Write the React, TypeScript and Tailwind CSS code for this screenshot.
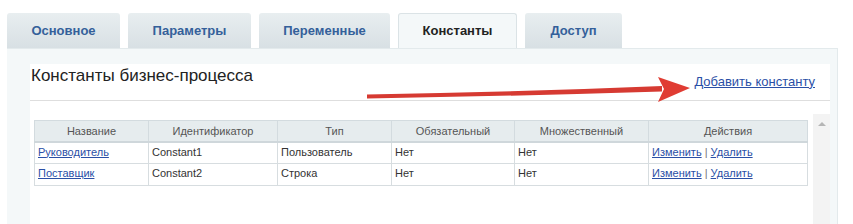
const tabs = [
  { label: 'Основное', w: 'w-[113px]' },
  { label: 'Параметры', w: 'w-[123px]' },
  { label: 'Переменные', w: 'w-[131px]' },
  { label: 'Константы', w: 'w-[119px]', active: true },
  { label: 'Доступ', w: 'w-[97px]' },
];

const rows = [
  { name: 'Руководитель', id: 'Constant1', type: 'Пользователь', req: 'Нет', multi: 'Нет' },
  { name: 'Поставщик', id: 'Constant2', type: 'Строка', req: 'Нет', multi: 'Нет' },
];

const cols = [
  { title: 'Название', w: 'w-[114px]' },
  { title: 'Идентификатор', w: 'w-[129px]' },
  { title: 'Тип', w: 'w-[114px]' },
  { title: 'Обязательный', w: 'w-[123px]' },
  { title: 'Множественный', w: 'w-[134px]' },
  { title: 'Действия', w: '' },
];

const linkCls = 'text-[#2a4fa6] underline underline-offset-1';

export default function App() {
  return (
    <div className="relative w-[853px] h-[224px] overflow-hidden bg-white pt-[13px] font-['Liberation_Sans',Arial,sans-serif]">
      <div className="flex gap-[8px] ml-[7px] h-[35px]">
        {tabs.map((t) => (
          <div
            key={t.label}
            className={`${t.w} flex items-center justify-center rounded-t-[3px] text-[13px] font-bold ${
              t.active
                ? 'bg-[#f4f8f9] border border-b-0 border-[#dbe3e6] text-[#222]'
                : 'bg-gradient-to-b from-[#e8eef0] to-[#d8e0e4] text-[#34609a]'
            }`}
          >
            {t.label}
          </div>
        ))}
      </div>

      <div className="ml-[7px] w-[831px] h-[200px] bg-[#f4f8f9] border-t border-r border-[#e3eaec] pt-[15px] pl-[23px]">
        <div className="w-[800px] h-[200px] bg-white">
          <div className="flex items-center justify-between h-[37px] border-b border-[#dedede] pl-[1px] pr-[15px]">
            <span className="text-[17px] text-[#222] -mt-[15px] pt-[2px]">Константы бизнес-процесса</span>
            <a className={`${linkCls} text-[13px] -mt-[1px]`}>Добавить константу</a>
          </div>

          <div className="flex pt-[13px]">
            <div className="pl-[4px] pt-[6px]">
              <table className="w-[774px] border-collapse text-[11px] table-fixed">
                <thead>
                  <tr className="h-[21px] bg-[#e6ecee]">
                    {cols.map((c) => (
                      <th
                        key={c.title}
                        className={`${c.w} border border-[#d3dbdf] border-b-2 border-b-[#cfd7db] font-normal text-[#555] text-center`}
                      >
                        {c.title}
                      </th>
                    ))}
                  </tr>
                </thead>
                <tbody>
                  {rows.map((r) => (
                    <tr key={r.id} className="h-[22px] text-[#333]">
                      <td className="border border-[#d7dde0] px-[3px] pb-[2px]">
                        <a className={linkCls}>{r.name}</a>
                      </td>
                      <td className="border border-[#d7dde0] px-[3px] pb-[2px]">{r.id}</td>
                      <td className="border border-[#d7dde0] px-[3px] pb-[2px]">{r.type}</td>
                      <td className="border border-[#d7dde0] px-[3px] pb-[2px]">{r.req}</td>
                      <td className="border border-[#d7dde0] px-[3px] pb-[2px]">{r.multi}</td>
                      <td className="border border-[#d7dde0] px-[3px] pb-[2px]">
                        <a className={linkCls}>Изменить</a>
                        <span className="text-[#777]"> | </span>
                        <a className={linkCls}>Удалить</a>
                      </td>
                    </tr>
                  ))}
                </tbody>
              </table>
            </div>
            <div className="ml-[5px] w-[17px] h-[120px] bg-[#f3f3f3] flex justify-center pt-[8px]">
              <div className="w-0 h-0 border-l-[4px] border-r-[4px] border-b-[4px] border-l-transparent border-r-transparent border-b-[#b5b5b5]" />
            </div>
          </div>
        </div>
      </div>

      {/* red annotation arrow */}
      <svg className="absolute left-0 top-0 pointer-events-none" width="853" height="224">
        <path d="M367 94.5 Q520 92 662 86 L662 91.5 Q520 96 367 98.5 Z" fill="#d63a32" />
        <polygon points="658,77 690,88 658,102 664,89" fill="#e03c33" />
      </svg>
    </div>
  );
}
